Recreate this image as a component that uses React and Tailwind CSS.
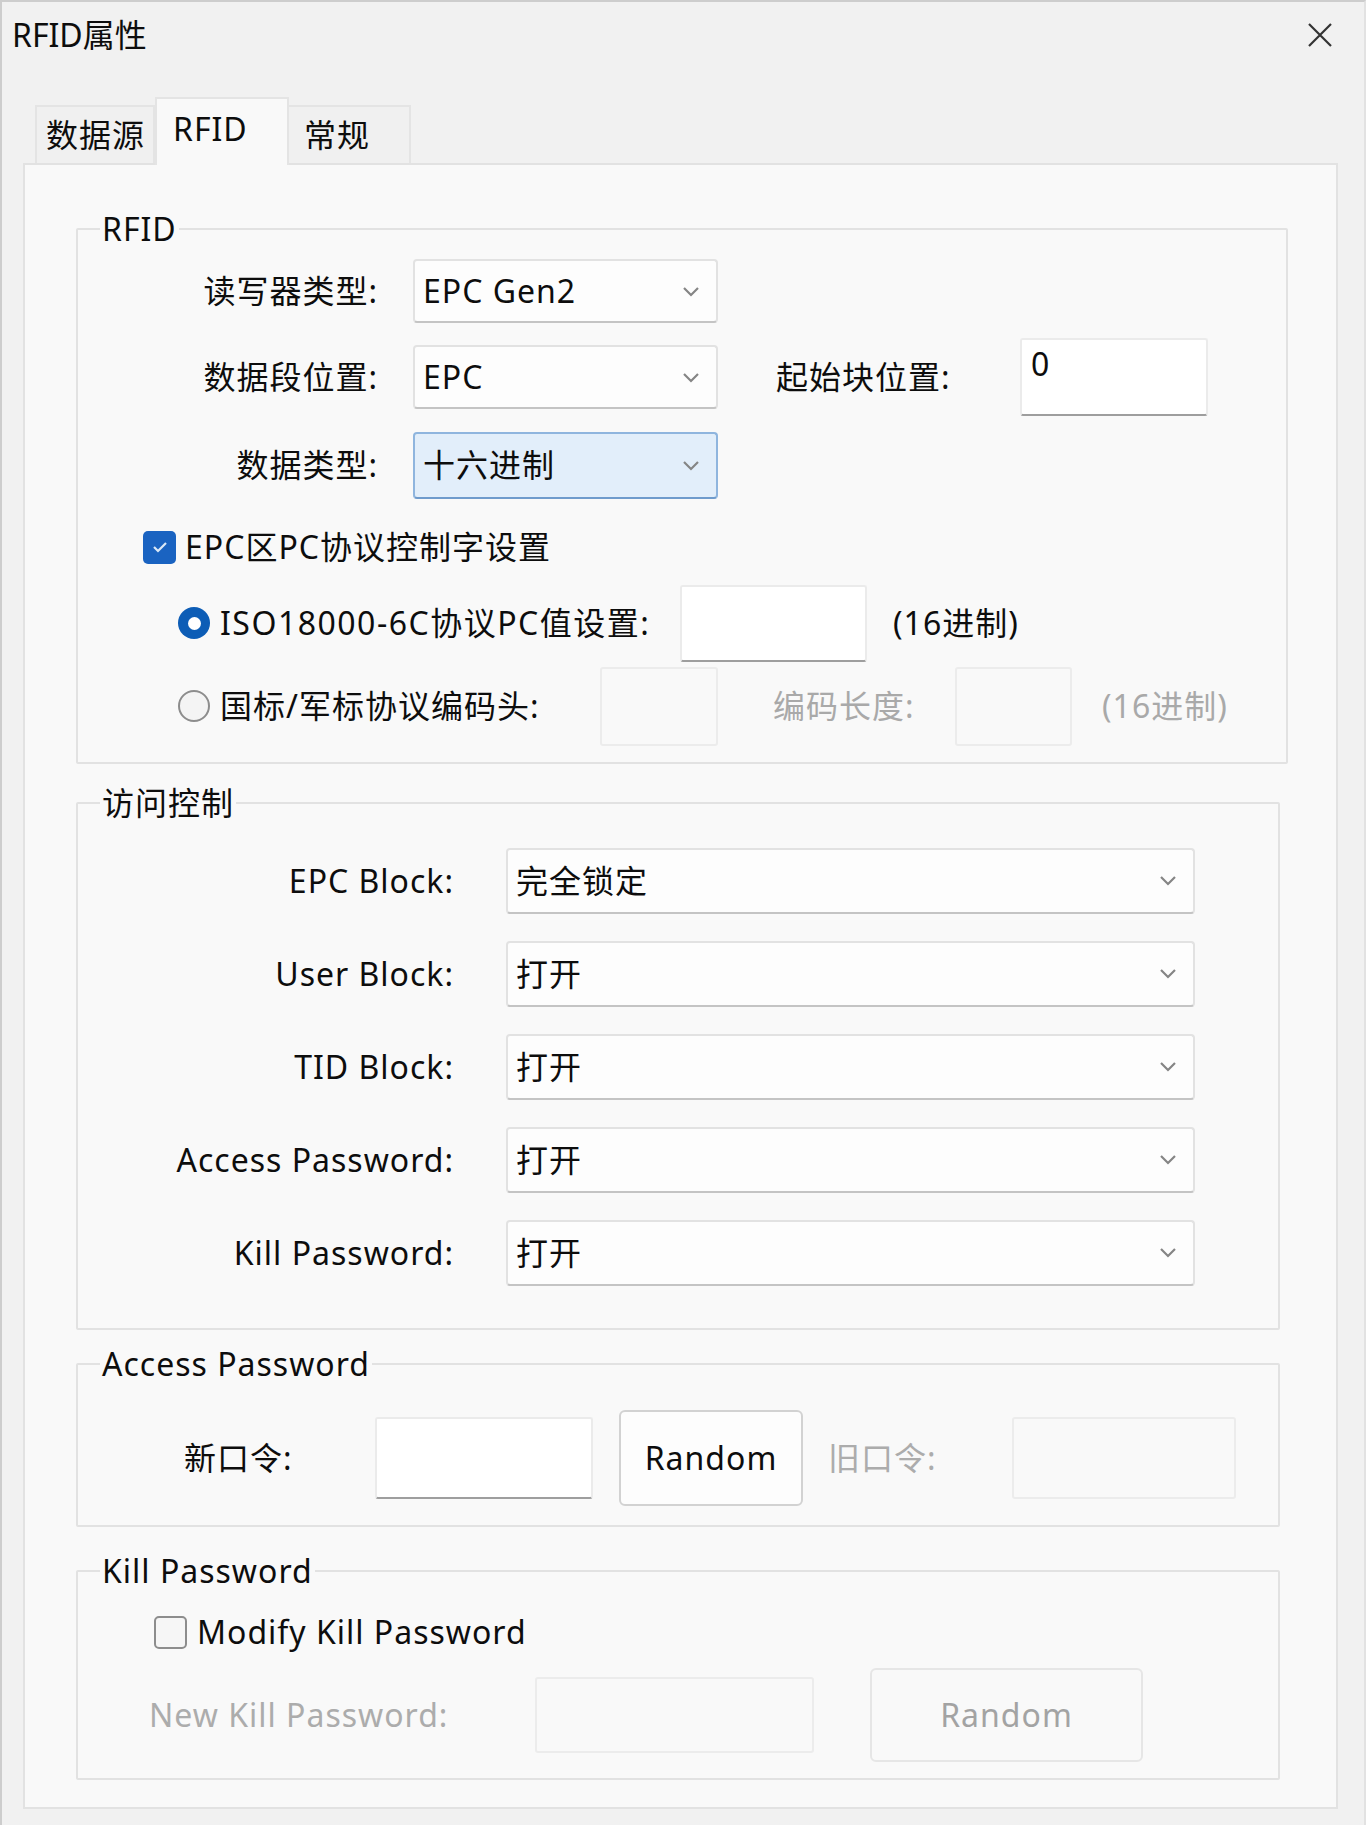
import React from "react";

function Chevron() {
  return (
    <svg width="18" height="11" viewBox="0 0 18 11" className="shrink-0">
      <polyline points="2,2 9,9 16,2" fill="none" stroke="#858585" strokeWidth="2.2" />
    </svg>
  );
}

function Combo({ value, className, blue }) {
  const look = blue
    ? "bg-[#e2eefa] border-[#8fb5de] border-b-[#6f9bcc]"
    : "bg-[#fdfdfd] border-[#e2e2e2] border-b-[#c4c4c4]";
  return (
    <div
      className={`flex items-center justify-between rounded-[4px] border-2 pl-[8px] pr-[16px] ${look} ${className}`}
    >
      <span>{value}</span>
      <Chevron />
    </div>
  );
}

function Edit({ className, value, disabled }) {
  const look = disabled
    ? "bg-[#f9f9f9] border-[#ececec]"
    : "bg-white border-[#ebebeb] border-b-[#9e9e9e]";
  return (
    <div className={`rounded-[3px] border-2 px-[9px] pt-[4px] leading-[40px] ${look} ${className}`}>
      {value}
    </div>
  );
}

function Group({ title, className, children }) {
  return (
    <fieldset className={`border-2 border-[#e2e2e2] rounded-[2px] ${className}`}>
      <legend className="ml-[22px] px-[2px] leading-[40px]">{title}</legend>
      {children}
    </fieldset>
  );
}

function Radio({ checked }) {
  if (checked) {
    return (
      <div className="w-[32px] h-[32px] rounded-full bg-[#0d5db6] flex items-center justify-center shrink-0">
        <div className="w-[13px] h-[13px] rounded-full bg-white" />
      </div>
    );
  }
  return <div className="w-[32px] h-[32px] rounded-full border-2 border-[#8d8d8d] bg-[#f4f4f4] shrink-0" />;
}

function Check({ checked }) {
  if (checked) {
    return (
      <div className="w-[33px] h-[33px] rounded-[5px] bg-[#1a63c1] flex items-center justify-center shrink-0">
        <svg width="16" height="12" viewBox="0 0 16 12">
          <polyline points="2,6 6,10 14,2" fill="none" stroke="#dbe8f7" strokeWidth="2.2" />
        </svg>
      </div>
    );
  }
  return <div className="w-[33px] h-[33px] rounded-[5px] border-2 border-[#8d8d8d] bg-[#f6f6f6] shrink-0" />;
}

const accessRows = [
  ["EPC Block:", "完全锁定"],
  ["User Block:", "打开"],
  ["TID Block:", "打开"],
  ["Access Password:", "打开"],
  ["Kill Password:", "打开"],
];

export default function App() {
  return (
    <div className="w-[1366px] h-[1825px] flex flex-col bg-[#f1f1f1] border-t-2 border-l-2 border-r-2 border-[#cdcdcd] border-r-[#e2e2e2] text-[#0d0d0d] text-[32px] tracking-[1px] font-[family-name:'Noto_Sans','Noto_Sans_CJK_SC',sans-serif]">
      {/* title bar */}
      <div className="h-[66px] flex items-center justify-between pl-[10px] pr-[31px]">
        <span className="text-[32px] tracking-normal">RFID属性</span>
        <svg width="26" height="26" viewBox="0 0 26 26">
          <path d="M2 2 L24 24 M24 2 L2 24" stroke="#333" strokeWidth="2.2" />
        </svg>
      </div>

      {/* tabs */}
      <div className="h-[95px] flex items-end pl-[33px]">
        <div className="w-[120px] h-[58px] flex items-center pl-[9px] bg-[#f0f0f0] border-2 border-b-0 border-[#e4e4e4]">
          数据源
        </div>
        <div className="relative z-10 -mb-[2px] w-[134px] h-[68px] flex items-center pl-[16px] pb-[6px] bg-[#f9f9f9] border-2 border-b-0 border-[#e4e4e4]">
          RFID
        </div>
        <div className="w-[122px] h-[58px] flex items-center pl-[15px] bg-[#f0f0f0] border-2 border-b-0 border-l-0 border-[#e4e4e4]">
          常规
        </div>
      </div>

      {/* panel */}
      <div className="ml-[21px] w-[1315px] bg-[#f9f9f9] border-2 border-[#e2e2e2] pl-[51px] pt-[44px] pb-[27px]">
        <Group title="RFID" className="w-[1212px] pb-[11px]">
          <div className="h-[84px] flex items-center">
            <span className="w-[300px] text-right">读写器类型:</span>
            <Combo value="EPC Gen2" className="ml-[35px] w-[305px] h-[64px]" />
          </div>
          <div className="h-[88px] flex items-center">
            <span className="w-[300px] text-right">数据段位置:</span>
            <Combo value="EPC" className="ml-[35px] w-[305px] h-[64px]" />
            <span className="ml-[58px] w-[244px]">起始块位置:</span>
            <Edit value="0" className="w-[188px] h-[78px]" />
          </div>
          <div className="h-[88px] flex items-center">
            <span className="w-[300px] text-right">数据类型:</span>
            <Combo value="十六进制" blue className="ml-[35px] w-[305px] h-[67px]" />
          </div>
          <div className="h-[76px] flex items-center pl-[65px] gap-[9px]">
            <Check checked />
            <span>EPC区PC协议控制字设置</span>
          </div>
          <div className="h-[76px] flex items-center pl-[100px]">
            <Radio checked />
            <span className="ml-[10px] w-[460px] tracking-[1.5px]">ISO18000-6C协议PC值设置:</span>
            <Edit className="w-[187px] h-[77px]" />
            <span className="ml-[26px]">(16进制)</span>
          </div>
          <div className="h-[90px] flex items-center pl-[100px]">
            <Radio />
            <span className="ml-[10px] w-[380px]">国标/军标协议编码头:</span>
            <Edit disabled className="w-[118px] h-[79px]" />
            <span className="ml-[55px] w-[182px] text-[#a9a9a9]">编码长度:</span>
            <Edit disabled className="w-[117px] h-[79px]" />
            <span className="ml-[30px] text-[#a9a9a9]">(16进制)</span>
          </div>
        </Group>

        <Group title="访问控制" className="mt-[19px] w-[1204px] pt-[11px] pb-[29px]">
          {accessRows.map(([label, value]) => (
            <div key={label} className="h-[93px] flex items-center">
              <span className="w-[376px] text-right">{label}</span>
              <Combo value={value} className="ml-[52px] w-[689px] h-[66px]" />
            </div>
          ))}
        </Group>

        <Group title="Access Password" className="mt-[14px] w-[1204px] pt-[26px] pb-[19px]">
          <div className="h-[96px] flex items-center pl-[106px]">
            <span className="w-[191px]">新口令:</span>
            <Edit className="w-[218px] h-[82px]" />
            <div className="ml-[26px] w-[184px] h-[96px] flex items-center justify-center rounded-[6px] border-2 border-[#d2d2d2] bg-[#fdfdfd]">
              Random
            </div>
            <span className="ml-[25px] w-[184px] text-[#acacac]">旧口令:</span>
            <Edit disabled className="w-[224px] h-[82px]" />
          </div>
        </Group>

        <Group title="Kill Password" className="mt-[24px] w-[1204px] pt-[8px] pb-[13px]">
          <div className="h-[66px] flex items-center pl-[76px] gap-[10px]">
            <Check />
            <span>Modify Kill Password</span>
          </div>
          <div className="h-[100px] flex items-center pl-[71px]">
            <span className="w-[386px] text-[#acacac]">New Kill Password:</span>
            <Edit disabled className="w-[279px] h-[76px]" />
            <div className="ml-[56px] w-[273px] h-[94px] flex items-center justify-center rounded-[6px] border-2 border-[#e6e6e6] bg-[#f9f9f9] text-[#a3a3a3]">
              Random
            </div>
          </div>
        </Group>
      </div>
    </div>
  );
}
